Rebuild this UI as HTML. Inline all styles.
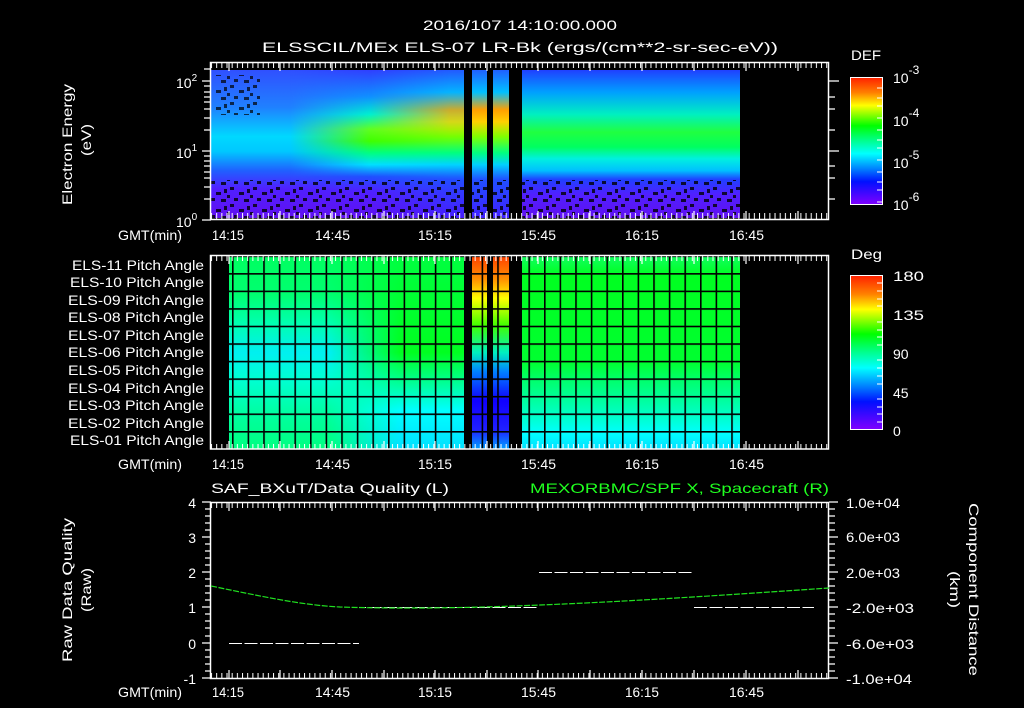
<!DOCTYPE html>
<html><head><meta charset="utf-8"><style>
html,body{margin:0;padding:0;background:#000;}
svg{display:block;}
text{font-family:"Liberation Sans",sans-serif;fill:#fff;font-size:14px;}
</style></head><body>
<svg width="1024" height="708" viewBox="0 0 1024 708" xmlns="http://www.w3.org/2000/svg">
<defs>
<linearGradient id="vL" x1="0" y1="70" x2="0" y2="218" gradientUnits="userSpaceOnUse">
<stop offset="0" stop-color="#3050ff"/><stop offset="0.25" stop-color="#2080ff"/>
<stop offset="0.45" stop-color="#00d8ff"/><stop offset="0.55" stop-color="#00c8ff"/>
<stop offset="0.68" stop-color="#2060ff"/><stop offset="0.8" stop-color="#5020ff"/><stop offset="1" stop-color="#6010f0"/>
</linearGradient>
<linearGradient id="vM" x1="0" y1="70" x2="0" y2="218" gradientUnits="userSpaceOnUse">
<stop offset="0" stop-color="#3040ff"/><stop offset="0.18" stop-color="#1090ff"/>
<stop offset="0.3" stop-color="#00f0d0"/><stop offset="0.4" stop-color="#60ff20"/>
<stop offset="0.48" stop-color="#40ff00"/><stop offset="0.56" stop-color="#00ff80"/>
<stop offset="0.64" stop-color="#00e0ff"/><stop offset="0.72" stop-color="#2050ff"/>
<stop offset="0.82" stop-color="#5020ff"/><stop offset="1" stop-color="#6010f0"/>
</linearGradient>
<linearGradient id="vY" x1="0" y1="70" x2="0" y2="218" gradientUnits="userSpaceOnUse">
<stop offset="0" stop-color="#2060ff"/><stop offset="0.15" stop-color="#00c0ff"/>
<stop offset="0.27" stop-color="#ffa000"/><stop offset="0.35" stop-color="#ffd000"/>
<stop offset="0.45" stop-color="#80ff00"/><stop offset="0.56" stop-color="#00ff80"/>
<stop offset="0.64" stop-color="#00d0ff"/><stop offset="0.74" stop-color="#2050ff"/><stop offset="1" stop-color="#4020ff"/>
</linearGradient>
<linearGradient id="vR" x1="0" y1="70" x2="0" y2="218" gradientUnits="userSpaceOnUse">
<stop offset="0" stop-color="#2040ff"/><stop offset="0.15" stop-color="#00a0ff"/>
<stop offset="0.3" stop-color="#00f0c0"/><stop offset="0.42" stop-color="#20ff40"/>
<stop offset="0.52" stop-color="#00ff60"/><stop offset="0.6" stop-color="#00f0e0"/>
<stop offset="0.68" stop-color="#00c0ff"/><stop offset="0.74" stop-color="#2040ff"/>
<stop offset="0.84" stop-color="#5020ff"/><stop offset="1" stop-color="#6010f0"/>
</linearGradient>
<linearGradient id="hfade" x1="290" y1="0" x2="370" y2="0" gradientUnits="userSpaceOnUse">
<stop offset="0" stop-color="#fff" stop-opacity="0"/><stop offset="1" stop-color="#fff" stop-opacity="1"/>
</linearGradient>
<mask id="mfade"><rect x="280" y="60" width="200" height="170" fill="url(#hfade)"/></mask>
<linearGradient id="hfadeY" x1="370" y1="0" x2="450" y2="0" gradientUnits="userSpaceOnUse">
<stop offset="0" stop-color="#fff" stop-opacity="0"/><stop offset="1" stop-color="#fff" stop-opacity="0.8"/>
</linearGradient>
<mask id="mfadeY"><rect x="360" y="60" width="120" height="170" fill="url(#hfadeY)"/></mask>
<pattern id="speck" x="0" y="0" width="23" height="17" patternUnits="userSpaceOnUse">
<rect x="0" y="0" width="4" height="3" fill="#000"/><rect x="9" y="5" width="5" height="3" fill="#000"/>
<rect x="17" y="2" width="3" height="4" fill="#000"/><rect x="4" y="11" width="4" height="3" fill="#000"/>
<rect x="14" y="12" width="5" height="3" fill="#000"/><rect x="20" y="8" width="3" height="3" fill="#000"/>
</pattern>
<pattern id="tickTop" x="211" y="0" width="5.17" height="1" patternUnits="userSpaceOnUse">
<rect x="0" y="0" width="1" height="1" fill="#fff"/>
</pattern>
<pattern id="gridV" x="232" y="0" width="15.6" height="10" patternUnits="userSpaceOnUse">
<rect x="0" y="0" width="1.6" height="10" fill="#000"/>
</pattern>
<pattern id="gridH" x="0" y="255.5" width="10" height="17.55" patternUnits="userSpaceOnUse">
<rect x="0" y="0" width="10" height="1.6" fill="#000"/>
</pattern>
<pattern id="dash" x="229" y="0" width="15.5" height="1" patternUnits="userSpaceOnUse">
<rect x="0" y="0" width="13" height="1" fill="#fff"/>
</pattern>
<linearGradient id="cb1" x1="0" y1="0" x2="0" y2="1">
<stop offset="0" stop-color="#ff2000"/><stop offset="0.12" stop-color="#ff8000"/><stop offset="0.22" stop-color="#ffff00"/>
<stop offset="0.38" stop-color="#00ff00"/><stop offset="0.5" stop-color="#00ff90"/><stop offset="0.6" stop-color="#00ffff"/>
<stop offset="0.72" stop-color="#0080ff"/><stop offset="0.82" stop-color="#0010ff"/><stop offset="1" stop-color="#8000ff"/>
</linearGradient>
<linearGradient id="pa" x1="0" y1="256" x2="0" y2="449" gradientUnits="userSpaceOnUse">
<stop offset="0" stop-color="#ff4000"/><stop offset="0.12" stop-color="#ff9000"/><stop offset="0.22" stop-color="#ffff00"/>
<stop offset="0.36" stop-color="#40ff00"/><stop offset="0.5" stop-color="#00f0c0"/><stop offset="0.6" stop-color="#0080ff"/>
<stop offset="0.75" stop-color="#1000ff"/><stop offset="0.9" stop-color="#2020ff"/><stop offset="1" stop-color="#00a0ff"/>
</linearGradient>
<linearGradient id="pR" x1="0" y1="256" x2="0" y2="449" gradientUnits="userSpaceOnUse">
<stop offset="0" stop-color="#10ff60"/><stop offset="0.1" stop-color="#00ff20"/><stop offset="0.55" stop-color="#00ff30"/>
<stop offset="0.65" stop-color="#00ff70"/><stop offset="0.75" stop-color="#00ffa0"/><stop offset="0.84" stop-color="#00ffd0"/>
<stop offset="0.92" stop-color="#00ffff"/><stop offset="1" stop-color="#00e0ff"/>
</linearGradient>
<linearGradient id="pL" x1="0" y1="256" x2="0" y2="449" gradientUnits="userSpaceOnUse">
<stop offset="0" stop-color="#00ff60"/><stop offset="0.2" stop-color="#00ff70"/><stop offset="0.35" stop-color="#00ffb0"/>
<stop offset="0.5" stop-color="#00f0f0"/><stop offset="0.65" stop-color="#00ffd0"/><stop offset="0.82" stop-color="#00ffa0"/><stop offset="1" stop-color="#00ff80"/>
</linearGradient>
<linearGradient id="pC" x1="0" y1="256" x2="0" y2="449" gradientUnits="userSpaceOnUse">
<stop offset="0" stop-color="#00ff40"/><stop offset="0.5" stop-color="#00ff20"/><stop offset="0.65" stop-color="#00ff90"/>
<stop offset="0.8" stop-color="#00ffff"/><stop offset="1" stop-color="#00e0ff"/>
</linearGradient>
<linearGradient id="pLR" x1="330" y1="0" x2="400" y2="0" gradientUnits="userSpaceOnUse">
<stop offset="0" stop-color="#fff" stop-opacity="0"/><stop offset="1" stop-color="#fff"/>
</linearGradient>
<mask id="mpl"><rect x="320" y="250" width="150" height="200" fill="url(#pLR)"/></mask>
</defs>

<!-- titles -->
<text x="423" y="30" font-size="16" textLength="194" lengthAdjust="spacingAndGlyphs">2016/107 14:10:00.000</text>
<text x="262" y="52" font-size="16" textLength="516" lengthAdjust="spacingAndGlyphs">ELSSCIL/MEx ELS-07 LR-Bk  (ergs/(cm**2-sr-sec-eV))</text>

<!-- Panel 1 spectrogram -->
<rect x="211" y="70" width="254" height="148" fill="url(#vL)"/>
<rect x="280" y="70" width="185" height="148" fill="url(#vM)" mask="url(#mfade)"/>
<rect x="360" y="70" width="105" height="148" fill="url(#vY)" mask="url(#mfadeY)"/>
<rect x="472" y="70" width="37" height="148" fill="url(#vY)"/>
<rect x="522" y="70" width="218" height="148" fill="url(#vR)"/>
<rect x="211" y="180" width="529" height="38" fill="url(#speck)" opacity="0.8"/>
<rect x="215" y="75" width="45" height="40" fill="url(#speck)" opacity="0.7"/>
<rect x="464" y="70" width="8" height="148" fill="#000"/>
<rect x="487" y="70" width="6" height="148" fill="#000"/>
<rect x="509" y="70" width="13" height="148" fill="#000"/>
<!-- frame 1 -->
<rect x="210.5" y="62.5" width="618" height="157" fill="none" stroke="#fff" stroke-width="1.5"/>
<rect x="211" y="62" width="618" height="6" fill="url(#tickTop)"/>
<rect x="211" y="213" width="618" height="6" fill="url(#tickTop)"/>
<g stroke="#fff" stroke-width="1.2">
<path d="M229 62v9M280 62v9M332 62v9M384 62v9M435 62v9M487 62v9M538 62v9M590 62v9M642 62v9M694 62v9M746 62v9M798 62v9"/>
<path d="M229 220v-9M280 220v-9M332 220v-9M384 220v-9M435 220v-9M487 220v-9M538 220v-9M590 220v-9M642 220v-9M694 220v-9M746 220v-9M798 220v-9"/>
<path d="M202 81h9M202 151h9M202 220h9M204 199h7M204 187h7M204 178h7M204 172h7M204 166h7M204 161h7M204 156h7M204 130h7M204 118h7M204 109h7M204 102h7M204 97h7M204 92h7M204 86h7M204 69h7"/>
<path d="M829 81h10M829 151h10M829 97h6M829 109h6M829 130h6M829 166h6M829 178h6M829 199h6"/>
</g>
<text x="176" y="88" font-size="15">10<tspan font-size="10" dy="-7">2</tspan></text>
<text x="176" y="158" font-size="15">10<tspan font-size="10" dy="-7">1</tspan></text>
<text x="176" y="227" font-size="15">10<tspan font-size="10" dy="-7">0</tspan></text>
<text transform="translate(72,205) rotate(-90)" font-size="15" textLength="121" lengthAdjust="spacingAndGlyphs">Electron Energy</text>
<text transform="translate(91,156) rotate(-90)" font-size="15" textLength="32" lengthAdjust="spacingAndGlyphs">(eV)</text>
<g font-size="14">
<text x="118" y="240" textLength="64" lengthAdjust="spacingAndGlyphs">GMT(min)</text>
<text x="212" y="240" textLength="32" lengthAdjust="spacingAndGlyphs">14:15</text><text x="315" y="240" textLength="35" lengthAdjust="spacingAndGlyphs">14:45</text><text x="418" y="240" textLength="34" lengthAdjust="spacingAndGlyphs">15:15</text>
<text x="521" y="240" textLength="35" lengthAdjust="spacingAndGlyphs">15:45</text><text x="625" y="240" textLength="34" lengthAdjust="spacingAndGlyphs">16:15</text><text x="729" y="240" textLength="35" lengthAdjust="spacingAndGlyphs">16:45</text>
</g>
<!-- colorbar 1 -->
<text x="851" y="60" font-size="16" textLength="30" lengthAdjust="spacingAndGlyphs">DEF</text>
<rect x="850.5" y="77.5" width="32" height="127" fill="url(#cb1)" stroke="#fff" stroke-width="1"/>
<g stroke="#fff"><path d="M877 88h5M877 98h5M877 106h5M877 118h5M877 130h5M877 140h5M877 148h5M877 160h5M877 172h5M877 182h5M877 190h5M877 202h5"/></g>
<g font-size="18"><text x="893" y="83">10<tspan font-size="12" dy="-9">-3</tspan></text>
<text x="893" y="126">10<tspan font-size="12" dy="-9">-4</tspan></text>
<text x="893" y="168">10<tspan font-size="12" dy="-9">-5</tspan></text>
<text x="893" y="210">10<tspan font-size="12" dy="-9">-6</tspan></text></g>

<!-- Panel 2 -->
<rect x="229" y="256" width="236" height="193" fill="url(#pL)"/>
<rect x="330" y="256" width="135" height="193" fill="url(#pC)" mask="url(#mpl)"/>
<rect x="472" y="256" width="37" height="193" fill="url(#pa)"/>
<rect x="522" y="256" width="218" height="193" fill="url(#pR)"/>
<rect x="229" y="256" width="511" height="193" fill="url(#gridV)"/>
<rect x="229" y="256" width="511" height="193" fill="url(#gridH)"/>
<rect x="464" y="256" width="8" height="193" fill="#000"/>
<rect x="487" y="256" width="6" height="193" fill="#000"/>
<rect x="509" y="256" width="13" height="193" fill="#000"/>
<rect x="210.5" y="255.5" width="618" height="193.5" fill="none" stroke="#fff" stroke-width="1.5"/>
<rect x="211" y="256" width="618" height="5" fill="url(#tickTop)"/>
<rect x="211" y="444" width="618" height="5" fill="url(#tickTop)"/>
<g stroke="#fff" stroke-width="1.2">
<path d="M229 256v8M280 256v8M332 256v8M384 256v8M435 256v8M487 256v8M538 256v8M590 256v8M642 256v8M694 256v8M746 256v8M798 256v8"/>
<path d="M229 449v-8M280 449v-8M332 449v-8M384 449v-8M435 449v-8M487 449v-8M538 449v-8M590 449v-8M642 449v-8M694 449v-8M746 449v-8M798 449v-8"/>
</g>
<g font-size="13">
<text x="72" y="270" textLength="132" lengthAdjust="spacingAndGlyphs">ELS-11 Pitch Angle</text><text x="70" y="287" textLength="134" lengthAdjust="spacingAndGlyphs">ELS-10 Pitch Angle</text>
<text x="68" y="305" textLength="136" lengthAdjust="spacingAndGlyphs">ELS-09 Pitch Angle</text><text x="68" y="322" textLength="136" lengthAdjust="spacingAndGlyphs">ELS-08 Pitch Angle</text>
<text x="68" y="340" textLength="136" lengthAdjust="spacingAndGlyphs">ELS-07 Pitch Angle</text><text x="68" y="357" textLength="136" lengthAdjust="spacingAndGlyphs">ELS-06 Pitch Angle</text>
<text x="68" y="375" textLength="136" lengthAdjust="spacingAndGlyphs">ELS-05 Pitch Angle</text><text x="68" y="393" textLength="136" lengthAdjust="spacingAndGlyphs">ELS-04 Pitch Angle</text>
<text x="68" y="410" textLength="136" lengthAdjust="spacingAndGlyphs">ELS-03 Pitch Angle</text><text x="68" y="428" textLength="136" lengthAdjust="spacingAndGlyphs">ELS-02 Pitch Angle</text>
<text x="70" y="445" textLength="134" lengthAdjust="spacingAndGlyphs">ELS-01 Pitch Angle</text>
</g>
<g font-size="14">
<text x="118" y="469" textLength="64" lengthAdjust="spacingAndGlyphs">GMT(min)</text>
<text x="212" y="469" textLength="32" lengthAdjust="spacingAndGlyphs">14:15</text><text x="315" y="469" textLength="35" lengthAdjust="spacingAndGlyphs">14:45</text><text x="418" y="469" textLength="34" lengthAdjust="spacingAndGlyphs">15:15</text>
<text x="521" y="469" textLength="35" lengthAdjust="spacingAndGlyphs">15:45</text><text x="625" y="469" textLength="34" lengthAdjust="spacingAndGlyphs">16:15</text><text x="729" y="469" textLength="35" lengthAdjust="spacingAndGlyphs">16:45</text>
</g>
<text x="851" y="259" font-size="16" textLength="31" lengthAdjust="spacingAndGlyphs">Deg</text>
<rect x="850.5" y="275.5" width="32" height="154" fill="url(#cb1)" stroke="#fff" stroke-width="1"/>
<g stroke="#fff"><path d="M877 283h5M877 291h5M877 299h5M877 306h5M877 322h5M877 330h5M877 337h5M877 345h5M877 360h5M877 368h5M877 376h5M877 384h5M877 399h5M877 407h5M877 414h5M877 422h5"/></g>
<g font-size="18"><text x="893" y="281" textLength="31" lengthAdjust="spacingAndGlyphs">180</text><text x="893" y="320" textLength="31" lengthAdjust="spacingAndGlyphs">135</text><text x="893" y="359">90</text><text x="893" y="398">45</text><text x="893" y="436">0</text></g>

<!-- Panel 3 -->
<text x="211" y="493" font-size="15" textLength="238" lengthAdjust="spacingAndGlyphs">SAF_BXuT/Data Quality (L)</text>
<text x="530" y="493" font-size="15" style="fill:#20ff20" textLength="299" lengthAdjust="spacingAndGlyphs">MEXORBMC/SPF X, Spacecraft (R)</text>
<rect x="210.5" y="502.5" width="618" height="176" fill="none" stroke="#fff" stroke-width="1.5"/>
<rect x="211" y="503" width="618" height="5" fill="url(#tickTop)"/>
<rect x="211" y="673" width="618" height="5" fill="url(#tickTop)"/>
<g stroke="#fff" stroke-width="1.2">
<path d="M229 503v8M280 503v8M332 503v8M384 503v8M435 503v8M487 503v8M538 503v8M590 503v8M642 503v8M694 503v8M746 503v8M798 503v8"/>
<path d="M229 678v-8M280 678v-8M332 678v-8M384 678v-8M435 678v-8M487 678v-8M538 678v-8M590 678v-8M642 678v-8M694 678v-8M746 678v-8M798 678v-8"/>
<path d="M202 502h9M202 537h9M202 572h9M202 607h9M202 643h9M202 678h9"/>
<path d="M205 509h6M205 516h6M205 523h6M205 530h6M205 544h6M205 551h6M205 558h6M205 565h6M205 579h6M205 586h6M205 593h6M205 600h6M205 614h6M205 621h6M205 628h6M205 636h6M205 650h6M205 657h6M205 664h6M205 671h6"/>
<path d="M829 502h9M829 537h9M829 572h9M829 607h9M829 643h9M829 678h9"/>
<path d="M829 509h6M829 516h6M829 523h6M829 530h6M829 544h6M829 551h6M829 558h6M829 565h6M829 579h6M829 586h6M829 593h6M829 600h6M829 614h6M829 621h6M829 628h6M829 636h6M829 650h6M829 657h6M829 664h6M829 671h6"/>
</g>
<g font-size="15" text-anchor="end">
<text x="196" y="508">4</text><text x="196" y="543">3</text><text x="196" y="578">2</text>
<text x="196" y="613">1</text><text x="196" y="649">0</text><text x="196" y="684">-1</text>
</g>
<g font-size="15">
<text x="846" y="508" textLength="54" lengthAdjust="spacingAndGlyphs">1.0e+04</text><text x="846" y="542" textLength="54" lengthAdjust="spacingAndGlyphs">6.0e+03</text><text x="846" y="578" textLength="54" lengthAdjust="spacingAndGlyphs">2.0e+03</text>
<text x="846" y="613" textLength="68" lengthAdjust="spacingAndGlyphs">-2.0e+03</text><text x="846" y="649" textLength="68" lengthAdjust="spacingAndGlyphs">-6.0e+03</text><text x="846" y="684" textLength="66" lengthAdjust="spacingAndGlyphs">-1.0e+04</text>
</g>
<text transform="translate(72,662) rotate(-90)" font-size="15" textLength="144" lengthAdjust="spacingAndGlyphs">Raw Data Quality</text>
<text transform="translate(91,612) rotate(-90)" font-size="15" textLength="44" lengthAdjust="spacingAndGlyphs">(Raw)</text>
<text transform="translate(969,503) rotate(90)" font-size="15" textLength="173" lengthAdjust="spacingAndGlyphs">Component Distance</text>
<text transform="translate(950,571) rotate(90)" font-size="15" textLength="37" lengthAdjust="spacingAndGlyphs">(km)</text>
<rect x="229" y="643" width="130" height="1" fill="url(#dash)"/>
<rect x="359" y="607" width="179" height="1" fill="url(#dash)"/>
<rect x="538" y="572" width="154" height="1" fill="url(#dash)"/>
<rect x="693" y="607" width="121" height="1" fill="url(#dash)"/>
<path d="M211 586 C260 596,300 605,340 607 C400 609,470 608,540 605 C640 601,740 594,829 588" fill="none" stroke="#20e020" stroke-width="1.2" stroke-dasharray="6 1.5"/>
<g font-size="14">
<text x="118" y="697" textLength="64" lengthAdjust="spacingAndGlyphs">GMT(min)</text>
<text x="212" y="697" textLength="32" lengthAdjust="spacingAndGlyphs">14:15</text><text x="315" y="697" textLength="35" lengthAdjust="spacingAndGlyphs">14:45</text><text x="418" y="697" textLength="34" lengthAdjust="spacingAndGlyphs">15:15</text>
<text x="521" y="697" textLength="35" lengthAdjust="spacingAndGlyphs">15:45</text><text x="625" y="697" textLength="34" lengthAdjust="spacingAndGlyphs">16:15</text><text x="729" y="697" textLength="35" lengthAdjust="spacingAndGlyphs">16:45</text>
</g>
</svg>
</body></html>
